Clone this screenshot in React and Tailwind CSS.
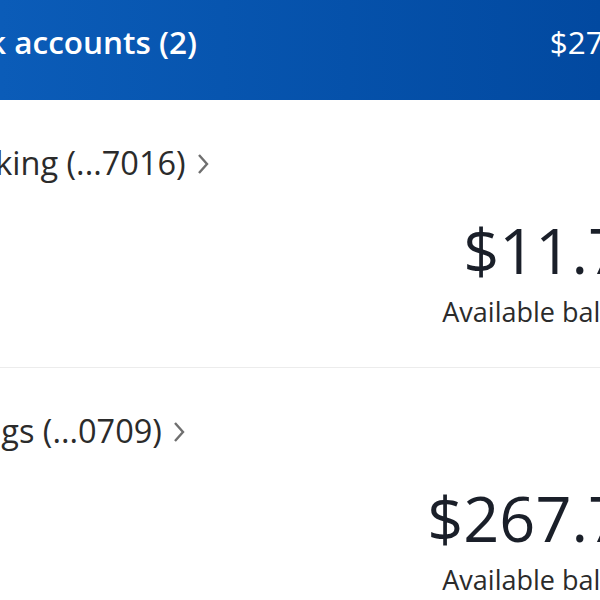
export default function App() {
  const rows = [
    { name: "Checking (...7016)", amount: "$11.72" },
    { name: "Savings (...0709)", amount: "$267.75" },
  ];
  return (
    <div className="w-[600px] h-[600px] overflow-hidden bg-white" style={{ fontFamily: '"Open Sans", sans-serif' }}>
      <div className="bg-gradient-to-r from-[#0b5cb8] to-[#0249a0] h-[100px]">
        <div className="w-[737px] ml-[-71px] flex justify-between pt-[22px]">
          <span className="text-white text-[31.5px] leading-[40px] font-semibold">Bank accounts (2)</span>
          <span className="text-white text-[31.5px] leading-[40px] font-normal">$279.47</span>
        </div>
      </div>
      {rows.map((r, i) => (
        <div key={i} className={i === 0 ? "border-b border-[#ececec]" : ""}>
          <div className="w-[739px] ml-[-79px] pt-[43px] pb-[38px] flex flex-col">
            <div className="flex items-center gap-[11px] text-[32.5px] leading-[40px] text-[#2b2b2b]">
              <span>{r.name}</span>
              <svg width="12" height="22" viewBox="0 0 12 22" className="mt-[1px]">
                <path d="M2 2 L10 11 L2 20" fill="none" stroke="#6f6f6f" strokeWidth="2.4" />
              </svg>
            </div>
            <div className="self-end text-right mt-[32px] text-[63px] leading-[70px] text-[#1a1f29]">{r.amount}</div>
            <div className="self-end text-right mt-[10px] text-[27px] leading-[34px] text-[#2b2b2b]">Available balance</div>
          </div>
        </div>
      ))}
    </div>
  );
}
